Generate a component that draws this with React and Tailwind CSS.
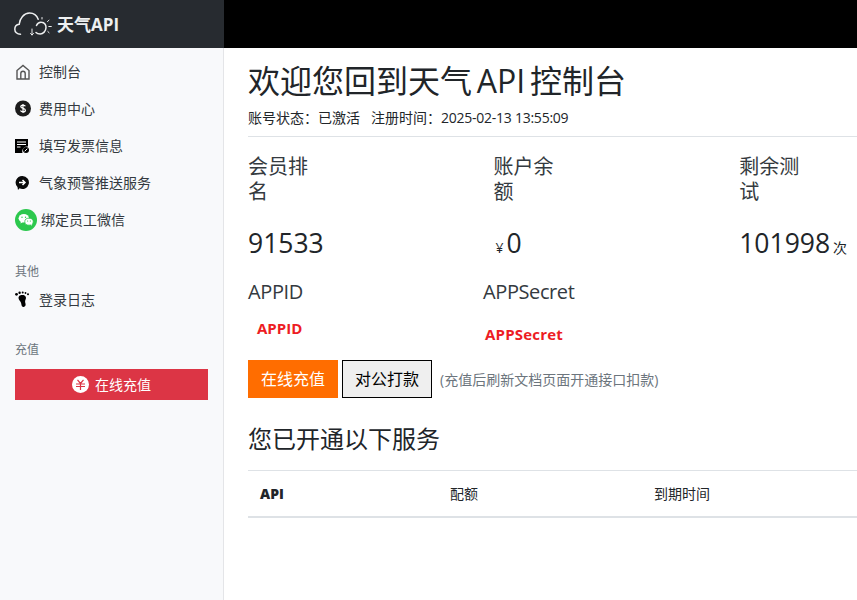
import React from "react";

function NavItem({ icon, label, className = "" }) {
  return (
    <div className={`flex items-center h-[37px] pl-[15px] ${className}`}>
      <span className="w-[24px] shrink-0 flex items-center">{icon}</span>
      <span className="text-[14px] text-[#343a40] leading-none">{label}</span>
    </div>
  );
}

const HomeIcon = (
  <svg width="16" height="16" viewBox="0 0 16 16" fill="none" stroke="#555" strokeWidth="1.4">
    <path d="M2 15V6.500L8 1.500l6 5V15z" />
    <path d="M5.800 15V9.500a2.200 2.200 0 0 1 4.400 0V15" />
  </svg>
);
const DollarIcon = (
  <svg width="17" height="17" viewBox="0 0 17 17">
    <circle cx="8" cy="8.500" r="8" fill="#1c1c1c" />
    <path d="M10.400 6.300C10 5.500 9.100 5.100 8 5.100c-1.300 0-2.200.6-2.200 1.600 0 2.300 4.600 1 4.600 3.500 0 1-1 1.700-2.400 1.700-1.200 0-2.100-.5-2.500-1.300M8 4v9" fill="none" stroke="#fff" strokeWidth="1.200" />
  </svg>
);
const InvoiceIcon = (
  <svg width="14" height="14" viewBox="0 0 14 14">
    <path d="M0 0h13v7.500A5 5 0 0 0 7.500 14H0z" fill="#000" />
    <path d="M2 3h9M2 5.500h9M2 8h3.500" stroke="#fff" strokeWidth="1" />
    <circle cx="11" cy="11" r="3" fill="#000" />
    <path d="m9.700 12.300 2.600-2.600" stroke="#fff" strokeWidth="1" />
  </svg>
);
const ArrowIcon = (
  <svg width="15" height="16" viewBox="0 0 15 16">
    <path d="M7.500 1a6.500 6.500 0 1 1-3 12.300L3 15l-.5-3A6.500 6.500 0 0 1 7.500 1z" fill="#0a0a0a" />
    <path d="M4 7.500h6M7.500 5 10 7.500 7.500 10" fill="none" stroke="#fff" strokeWidth="1.500" />
  </svg>
);
const WechatIcon = (
  <svg width="22" height="22" viewBox="0 0 22 22">
    <circle cx="11" cy="11" r="11" fill="#2cc84d" />
    <ellipse cx="8.800" cy="9.300" rx="5.200" ry="4.300" fill="#fff" />
    <path d="m6 12.500-.6 2 2.400-1.200z" fill="#fff" />
    <ellipse cx="14" cy="12.700" rx="4.200" ry="3.500" fill="#fff" stroke="#2cc84d" strokeWidth=".8" />
    <path d="m15.800 15.500 1.200 1.400-.2-2z" fill="#fff" />
    <circle cx="7" cy="8.200" r=".7" fill="#2cc84d" />
    <circle cx="10.500" cy="8.200" r=".7" fill="#2cc84d" />
    <circle cx="12.600" cy="12" r=".6" fill="#2cc84d" />
    <circle cx="15.400" cy="12" r=".6" fill="#2cc84d" />
  </svg>
);
const FootIcon = (
  <svg width="16" height="17" viewBox="0 0 16 17" fill="#000">
    <path d="M5 4.500c2.500-.8 5.300-.4 5.900 1.700.4 1.500-.7 2.600-.8 4-.1 1.300.6 2 .5 3.600-.1 1.500-1.300 2.400-2.600 2.100-1.800-.4-1.400-2.700-2-4.200C5.400 10 3.600 9 3.500 7c0-1.200.6-2.200 1.500-2.500z" />
    <circle cx="1.500" cy="3.300" r="1.400" />
    <circle cx="4.600" cy="1.800" r="1.200" />
    <circle cx="7.700" cy="1.600" r="1" />
    <circle cx="10.500" cy="2" r=".9" />
    <circle cx="13" cy="3.300" r="1" />
  </svg>
);
const Logo = (
  <svg width="38" height="24" viewBox="0 0 38 24" fill="none" stroke="#eef0f1" strokeWidth="1.500" strokeLinecap="round" className="shrink-0">
    <path d="M6.500 22.300C3 22.300.8 20 .8 17.200c0-2.800 1.900-4.800 4.400-5C5.700 6.500 10 1 15.500 1c4 0 7.300 2.300 8.700 6.200" />
    <path d="M22.500 13.500c1-2.300 3-3.400 5-3.200 3 .2 4.700 2.700 4.500 5.400-.2 3.400-2.800 6.300-5.800 6.300-1.800 0-3.300-.5-4.200-1.500" />
    <path d="M18 17v6M16.500 21.500 18 23l1.500-1.500" strokeWidth="1" />
    <path d="M33.500 9.500l1.500-1.300M34.800 14.500h2.500M33.800 19.500l1.300 1.200M28 7V5.500" strokeWidth="1" />
  </svg>
);

function Stat({ label, value, prefix, suffix }) {
  return (
    <div className="w-[245.600px] shrink-0">
      <div className="w-[65px] text-[20px] leading-[25px] text-[#343a40]">{label}</div>
      <div className="mt-[21px] h-[36px] flex items-baseline text-[#212529]">
        {prefix && <span className="text-[14px] mr-[3px] ml-[2px]">{prefix}</span>}
        <span className="text-[26.500px] leading-[36px]">{value}</span>
        {suffix && <span className="text-[14px] ml-[3px]">{suffix}</span>}
      </div>
    </div>
  );
}

export default function App() {
  return (
    <div
      className="w-[857px] h-[600px] overflow-hidden flex flex-col bg-white"
      style={{ fontFamily: '"Open Sans", "Noto Sans CJK SC", sans-serif' }}
    >
      <header className="h-[48px] shrink-0 flex bg-black">
        <div className="w-[224px] bg-[#272b30] flex items-center pl-[14px] gap-[5px]">
          {Logo}
          <span className="text-[#eef0f1] text-[17px] font-bold leading-none">天气API</span>
        </div>
      </header>
      <div className="flex flex-1 min-h-0">
        <aside className="w-[224px] shrink-0 bg-[#f8f9fb] border-r border-[#e4e5e8] flex flex-col pt-[5px]">
          <NavItem icon={HomeIcon} label="控制台" />
          <NavItem icon={DollarIcon} label="费用中心" />
          <NavItem icon={InvoiceIcon} label="填写发票信息" />
          <NavItem icon={ArrowIcon} label="气象预警推送服务" />
          <div className="flex items-center h-[37px] pl-[15px]">
            <span className="w-[26px] shrink-0 flex">{WechatIcon}</span>
            <span className="text-[14px] text-[#343a40]">绑定员工微信</span>
          </div>
          <div className="pl-[15px] mt-[25px] text-[12px] leading-[18px] text-[#6c757d]">其他</div>
          <NavItem icon={FootIcon} label="登录日志" />
          <div className="pl-[15px] mt-[23px] text-[12px] leading-[18px] text-[#6c757d]">充值</div>
          <div className="ml-[15px] mt-[10px] w-[193px] h-[31px] bg-[#dc3545] flex items-center justify-center gap-[6px] text-white text-[14px]">
            <span className="w-[17px] h-[17px] rounded-full bg-white flex items-center justify-center">
              <svg width="11" height="11" viewBox="0 0 11 11" fill="none" stroke="#dc3545" strokeWidth="1.200">
                <path d="M2.500.8 5.500 4.500 8.500.8M1 5h9M1 7.500h9M5.500 4.500V11" />
              </svg>
            </span>
            在线充值
          </div>
        </aside>
        <main className="flex-1 min-w-0 pl-[24px] pt-[14px]">
          <h1 className="text-[32px] leading-[38px] font-normal text-[#212529] [word-spacing:-3.500px]">
            欢迎您回到天气 <span className="font-medium">API</span> 控制台
          </h1>
          <p className="mt-[8px] text-[14px] leading-[20px] text-[#212529]">
            账号状态：已激活
            <span className="ml-[11px]">注册时间：<span className="tracking-[-0.25px]">2025-02-13 13:55:09</span></span>
          </p>
          <div className="mt-[8px] border-t border-[#dee2e6]" />
          <div className="flex mt-[17px] w-[800px]">
            <Stat label="会员排名" value="91533" />
            <Stat label="账户余额" value="0" prefix="¥" />
            <Stat label="剩余测试" value="101998" suffix="次" />
          </div>
          <div className="flex mt-[19px] text-[20px] leading-[24px] text-[#343a40] tracking-[-0.4px]">
            <div className="w-[235px]">APPID</div>
            <div>APPSecret</div>
          </div>
          <div className="flex text-[#ed1c24] text-[15px] font-bold leading-[20px]">
            <div className="w-[228px] ml-[9px] mt-[14px]">APPID</div>
            <div className="mt-[20px] tracking-[0.2px]">APPSecret</div>
          </div>
          <div className="flex items-center mt-[16px]">
            <button className="w-[90px] h-[38px] bg-[#ff6d00] text-white text-[16px]">在线充值</button>
            <button className="ml-[4px] w-[90px] h-[38px] bg-[#efefef] border border-black text-black text-[16px]">对公打款</button>
            <span className="ml-[8px] text-[14px] text-[#6c757d]">(充值后刷新文档页面开通接口扣款)</span>
          </div>
          <h2 className="mt-[26px] text-[24px] leading-[29px] font-normal text-[#212529]">您已开通以下服务</h2>
          <div className="mt-[17px] border-t border-[#dee2e6] border-b-2 h-[48px] flex items-center text-[14px] text-[#212529]">
            <div className="w-[202px] pl-[12px] font-extrabold">API</div>
            <div className="w-[204px]">配额</div>
            <div>到期时间</div>
          </div>
        </main>
      </div>
    </div>
  );
}
